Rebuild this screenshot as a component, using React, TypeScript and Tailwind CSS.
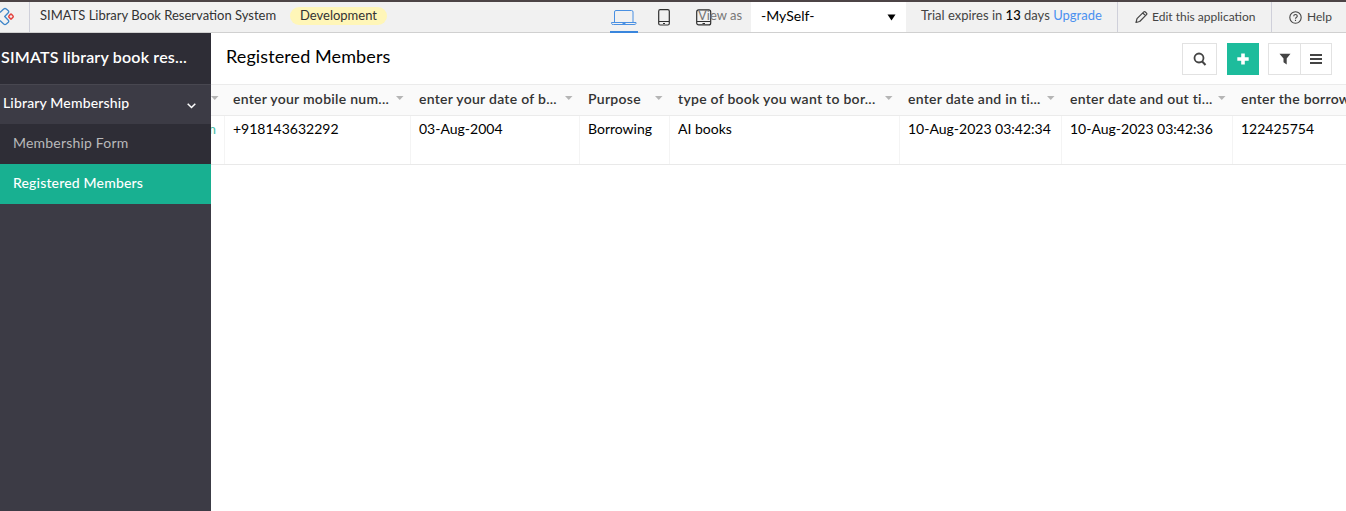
import type { ReactNode } from "react";

const columns = [
  { label: "enter your mobile num...", value: "+918143632292", col: "w-[186px]" },
  { label: "enter your date of b...", value: "03-Aug-2004", col: "w-[169px]" },
  { label: "Purpose", value: "Borrowing", col: "w-[90px]" },
  { label: "type of book you want to bor...", value: "AI books", col: "w-[230px]" },
  { label: "enter date and in ti...", value: "10-Aug-2023 03:42:34", col: "w-[162px]" },
  { label: "enter date and out ti...", value: "10-Aug-2023 03:42:36", col: "w-[171px]" },
  { label: "enter the borrowed book id", value: "122425754", col: "w-[220px]" },
];

function SortArrow() {
  return (
    <svg width="8" height="4" viewBox="0 0 8 4" className="shrink-0" fill="#b5b5b5">
      <path d="M0 0h7.500L3.750 4z" />
    </svg>
  );
}

function Logo() {
  return (
    <svg width="15" height="19" viewBox="0 0 15 19" fill="none" strokeWidth="1.300" strokeLinejoin="round">
      <path d="M0 5.500 3.700 2Q5 1 6.300 2L8.300 3.800Q9.200 4.800 8.300 5.700L4.700 9.500 8.300 13.300Q9.200 14.300 8.300 15.300L6.300 17Q5 18 3.700 17L0 13.500" stroke="#3f86c9" />
      <path d="M10.300 7.500Q11 6.800 11.700 7.500L13 8.900Q13.500 9.500 13 10.200L11.700 11.600Q11 12.200 10.300 11.600L9 10.200Q8.500 9.500 9 8.900Z" stroke="#e5433f" strokeWidth="1.500" />
    </svg>
  );
}

function DeviceTabs() {
  return (
    <div className="flex h-[31px] w-[102px]">
      <div className="flex w-7 shrink-0 justify-center border-b-2 border-[#3a86dd] pt-2">
        <svg width="26" height="17" viewBox="0 0 26 17" fill="none" stroke="#4a90e2">
          <path d="M3.500 12V2Q3.500.5 5 .5H20.500Q22 .5 22 2V12" />
          <path d="M.5 12.500H25V13.500Q25 14.500 23 14.500H2.500Q.5 14.500.5 13.500ZM11.500 13.500H14.500" />
        </svg>
      </div>
      <div className="ml-[20px] shrink-0 pt-[7px]">
        <svg width="12" height="17" viewBox="0 0 12 17" fill="none" stroke="#303030">
          <rect x=".7" y=".7" width="10.600" height="15.300" rx="1.500" strokeWidth="1.200" />
          <path d="M1 12.500H11" />
          <path d="M5 14.500H7" />
        </svg>
      </div>
      <div className="ml-[26px] shrink-0 pt-[7px]">
        <svg width="16" height="17" viewBox="0 0 16 17" fill="none" stroke="#303030">
          <rect x=".7" y=".9" width="14" height="15" rx="2" strokeWidth="1.200" />
          <path d="M1 12.500H14.500" />
          <path d="M6.500 14.500H9" />
        </svg>
      </div>
    </div>
  );
}

function TopBar() {
  return (
    <header className="flex h-[33px] shrink-0 whitespace-nowrap border-b border-t-2 border-b-[#d0d0d0] border-t-[#4c4446] bg-[#f1f1f1] text-[13px] leading-[27px] text-[#444]">
      <div className="flex w-[30px] border-r border-[#cfd0da] pt-[5px]">
        <Logo />
      </div>
      <div className="w-[260px] pl-[10px] text-[#333]">SIMATS Library Book Reservation System</div>
      <div className="mt-[5px] h-[18px] w-[97px] rounded-full bg-[#fff6b8] text-center leading-[17px] text-[#333]">Development</div>
      <div className="ml-[223px] w-[88px]"><DeviceTabs /></div>
      <div className="w-[53px] text-[#777]">View as</div>
      <div className="flex w-[155px] items-center justify-between bg-white pl-[10px] pr-[10px] text-black">
        <span className="-mt-[3px] text-[14px]">-MySelf-</span>
        <svg width="9" height="7" viewBox="0 0 9 7"><path d="M.5 .5H8.500L4.500 6.500z" /></svg>
      </div>
      <div className="w-[211px] pl-[15px]">
        Trial expires in <span className="font-medium text-black">13</span> days <span className="text-[#4a90f0]">Upgrade</span>
      </div>
      <div className="flex w-[154px] items-center border-l border-[#cfd0da] pl-[17px] text-[12px]">
        <svg width="13" height="14" viewBox="0 0 13 14" fill="none" stroke="#444" strokeWidth="1.200" strokeLinejoin="round">
          <path d="M1 12.500 2 8.700 8.800 1.900Q9.500 1.200 10.300 2L11.500 3.200Q12.200 4 11.500 4.700L4.700 11.500ZM7.800 3 10.500 5.700" />
        </svg>
        <span className="-mt-[2px] ml-[4px]">Edit this application</span>
      </div>
      <div className="flex w-[75px] items-center border-l border-[#cfd0da] pl-[17px] text-[12px]">
        <svg width="13" height="13" viewBox="0 0 13 13" fill="none" stroke="#444">
          <circle cx="6.500" cy="6.500" r="5.700" strokeWidth="1.100" />
          <path d="M4.700 5.200Q4.800 3.500 6.500 3.500T8.300 5.100Q8.300 6 7.300 6.500 6.500 7 6.500 7.800M6.500 8.800V9.900" strokeWidth="1.100" />
        </svg>
        <span className="-mt-[2px] ml-[5px]">Help</span>
      </div>
    </header>
  );
}

function Sidebar() {
  return (
    <aside className="flex w-[211px] shrink-0 flex-col whitespace-nowrap bg-[#3c3b45] text-[14px] text-white">
      <div className="h-[51px] bg-[#2e2d36] pl-px text-[16px] font-semibold leading-[48px] tracking-[0.19px]">SIMATS library book res...</div>
      <div className="flex h-10 items-center justify-between border-t border-[#484750] pl-[3px] pr-[15px] font-medium tracking-[0.16px]">
        <span className="-mt-[4px]">Library Membership</span>
        <svg width="9" height="6" viewBox="0 0 9 6" className="mt-[2px]" fill="none" stroke="white" strokeWidth="1.500"><path d="M.7.7 4.500 4.500 8.300.7" /></svg>
      </div>
      <div className="h-10 bg-[#2e2d36] pl-[13px] leading-[37px] tracking-[0.2px] text-[#b9b9bb]">Membership Form</div>
      <div className="h-10 bg-[#18b091] pl-[13px] font-medium leading-[37px] tracking-[0.17px]">Registered Members</div>
    </aside>
  );
}

function ToolButton({ children, className }: { children: ReactNode; className: string }) {
  return <button className={`flex h-8 items-center justify-center ${className}`}>{children}</button>;
}

function Toolbar() {
  return (
    <div className="mt-[10px] flex">
      <ToolButton className="w-[35px] border border-[#e2e2e2]">
        <svg width="14" height="14" viewBox="0 0 14 14" fill="none" stroke="#444" strokeWidth="2">
          <circle cx="6" cy="6" r="4.500" strokeWidth="1.800" /><path d="M9 9.300 12.500 13" />
        </svg>
      </ToolButton>
      <ToolButton className="ml-[10px] w-8 bg-[#1dbc9c]">
        <svg width="12" height="12" viewBox="0 0 12 12" fill="white"><path d="M4.200.5H7.800V4.200H11.700V7.800H7.800V11.500H4.200V7.800H.3V4.200H4.200Z" /></svg>
      </ToolButton>
      <ToolButton className="ml-[9px] w-[33px] border border-[#e2e2e2]">
        <svg width="12" height="12" viewBox="0 0 12 12" fill="#444"><path d="M.5.8H11.500L7.700 5.500V11.500L4.500 9.200V5.500Z" /></svg>
      </ToolButton>
      <ToolButton className="w-[31px] border-y border-r border-[#e2e2e2]">
        <svg width="12" height="10" viewBox="0 0 12 10" fill="#444"><path d="M0 0H12V2H0ZM0 4H12V6H0ZM0 8H12V10H0Z" /></svg>
      </ToolButton>
    </div>
  );
}

function MembersTable() {
  return (
    <div className="w-full overflow-hidden whitespace-nowrap text-[14px] text-black">
      <div className="flex h-8 border-y border-[#ebebeb] bg-[#fafafa] font-semibold leading-[27px] tracking-[0.27px] text-[#333]">
        <div className="w-[14px] shrink-0 pt-[11px]"><SortArrow /></div>
        {columns.map((c) => (
          <div key={c.label} className={`flex shrink-0 justify-between pl-2 pr-[7px] ${c.col}`}>
            <span>{c.label}</span>
            <div className="flex pt-[11px]"><SortArrow /></div>
          </div>
        ))}
      </div>
      <div className="flex h-[49px] border-b border-[#e9e9e9] leading-[25px]">
        <div className="flex w-[14px] shrink-0 justify-end border-r border-[#f4f4f4] pr-2 text-[#48bfa8]">com</div>
        {columns.map((c) => (
          <div key={c.label} className={`shrink-0 border-r border-[#f4f4f4] pl-2 ${c.col}`}>{c.value}</div>
        ))}
      </div>
    </div>
  );
}

export default function App() {
  return (
    <div className="flex h-[511px] w-[1346px] flex-col overflow-hidden bg-white font-['Lato',sans-serif]">
      <TopBar />
      <div className="flex min-h-0 flex-1">
        <Sidebar />
        <main className="min-w-0 flex-1">
          <div className="flex h-[51px] justify-between pl-[15px] pr-[14px]">
            <h1 className="text-[18px] leading-[46px] tracking-[0.1px] text-black">Registered Members</h1>
            <Toolbar />
          </div>
          <MembersTable />
        </main>
      </div>
    </div>
  );
}
